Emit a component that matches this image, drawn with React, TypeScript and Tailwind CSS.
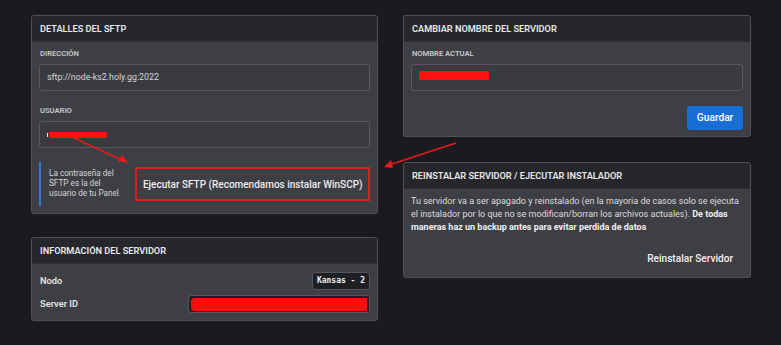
import React from "react";

const font = { fontFamily: "Roboto, 'Noto Sans', sans-serif" };

function Card({ title, children }: { title: string; children: React.ReactNode }) {
  return (
    <div className="rounded-[3px] border border-[#505156] bg-[#3e3f44] overflow-hidden">
      <div className="h-[26px] bg-[#26272b] border-b border-[#2f3034] flex items-center px-2 text-[9.2px] font-semibold text-[#e8e8ea] uppercase">
        {title}
      </div>
      {children}
    </div>
  );
}

export default function App() {
  return (
    <div style={font} className="relative w-[781px] h-[345px] bg-[#1b1b1f] overflow-hidden">
      <div className="flex gap-[25px] pl-[31px] pt-[15px]">
        {/* Left column */}
        <div className="w-[347px] flex flex-col gap-[23px]">
          <Card title="Detalles del SFTP">
            <div className="px-[7px] pt-[7px] pb-[7px] flex flex-col">
              <div className="text-[7.6px] font-semibold text-[#c9c9cd] uppercase h-[9px] leading-[9px] pl-[1px]">Dirección</div>
              <div className="mt-[6px] h-[27px] rounded-[3px] border border-[#57585d] bg-[#3a3b40] flex items-center px-[7px] text-[8.8px] text-[#d6d6d8]">
                sftp://node-ks2.holy.gg:2022
              </div>
              <div className="mt-[15px] text-[7.6px] font-semibold text-[#c9c9cd] uppercase h-[9px] leading-[9px] pl-[1px]">Usuario</div>
              <div className="mt-[6px] h-[27px] rounded-[3px] border border-[#57585d] bg-[#3a3b40] flex items-center px-[7px]">
                <div className="flex items-center">
                  <div className="w-[1px] h-[4px] bg-[#e8e8e8] mr-[1px]" />
                  <div className="w-[58px] h-[6px] bg-[#ff1010] rounded-[1px]" />
                </div>
              </div>
              <div className="mt-[14px] flex items-center">
                <div className="w-[97px] h-[44px] border-l-[2.5px] border-[#3b73d6] pl-[8px] flex items-center text-[8.2px] leading-[9.8px] text-[#d4d4d7]">
                  <div>La contraseña del<br />SFTP es la del<br />usuario de tu Panel.</div>
                </div>
                <div className="ml-auto w-[236px] h-[34px] border-2 border-solid border-[#e3191b] flex items-center justify-center whitespace-nowrap text-[10px] font-medium text-[#ececee]">
                  Ejecutar SFTP (Recomendamos instalar WinSCP)
                </div>
              </div>
            </div>
          </Card>

          <Card title="Información del Servidor">
            <div className="px-[7px] pt-[8px] pb-[7px] flex flex-col gap-[5px]">
              <div className="flex items-center justify-between">
                <span className="text-[9.3px] font-semibold text-[#e2e2e4] pl-[1px]">Nodo</span>
                <span
                  style={{ fontFamily: "'DejaVu Sans Mono', monospace" }}
                  className="h-[18px] w-[58px] rounded-[3px] border border-[#55565b] bg-[#1f2023] flex items-center justify-center text-[8px] font-bold text-[#ececee] whitespace-pre"
                >
                  Kansas - 2
                </span>
              </div>
              <div className="flex items-center justify-between">
                <span className="text-[9.3px] font-semibold text-[#e2e2e4] pl-[1px]">Server ID</span>
                <span className="h-[18px] w-[182px] rounded-[3px] border border-[#55565b] bg-[#1f2023] flex items-center px-[2px]">
                  <span className="h-[13px] w-full bg-[#ff0d0d] rounded-l-[4px]" />
                </span>
              </div>
            </div>
          </Card>
        </div>

        {/* Right column */}
        <div className="w-[348px] flex flex-col gap-[25px]">
          <Card title="Cambiar nombre del servidor">
            <div className="px-[7px] pt-[7px] pb-[6px] flex flex-col">
              <div className="text-[7.6px] font-semibold text-[#c9c9cd] uppercase h-[9px] leading-[9px] pl-[1px]">Nombre actual</div>
              <div className="mt-[6px] h-[27px] rounded-[3px] border border-[#57585d] bg-[#3a3b40] flex items-center px-[7px]">
                <div className="w-[70px] h-[9px] bg-[#ff1010] rounded-[1px] -mt-[4px]" />
              </div>
              <div className="mt-[15px] flex justify-end">
                <button className="h-[24px] w-[56px] rounded-[3px] bg-[#176fd6] text-[10.2px] font-medium text-white">
                  Guardar
                </button>
              </div>
            </div>
          </Card>

          <Card title="Reinstalar Servidor / Ejecutar Instalador">
            <div className="px-[7px] pt-[6px] pb-[6px] flex flex-col">
              <p className="text-[9px] leading-[13px] text-[#dcdcde] whitespace-nowrap">
                Tu servidor va a ser apagado y reinstalado (en la mayoria de casos solo se ejecuta
                <br />
                el instalador por lo que no se modifican/borran los archivos actuales).{" "}
                <span className="font-bold text-[#efeff0]">De todas</span>
                <br />
                <span className="font-bold text-[#efeff0]">maneras haz un backup antes para evitar perdida de datos</span>
              </p>
              <div className="mt-[13px] flex justify-end">
                <button className="h-[24px] px-[10px] text-[10.1px] font-medium text-[#f0f0f2]">
                  Reinstalar Servidor
                </button>
              </div>
            </div>
          </Card>
        </div>
      </div>

      {/* Annotation arrows */}
      <svg className="absolute inset-0 pointer-events-none" width="781" height="345" viewBox="0 0 781 345">
        <line x1="72" y1="137" x2="124" y2="161" stroke="#e61b1b" strokeWidth="1.5" />
        <polygon points="128,163 118,161 122,155" fill="#e61b1b" />
        <line x1="456" y1="143" x2="389" y2="165" stroke="#e61b1b" strokeWidth="1.5" />
        <polygon points="384,167 391,160 393,168" fill="#e61b1b" />
      </svg>
    </div>
  );
}
